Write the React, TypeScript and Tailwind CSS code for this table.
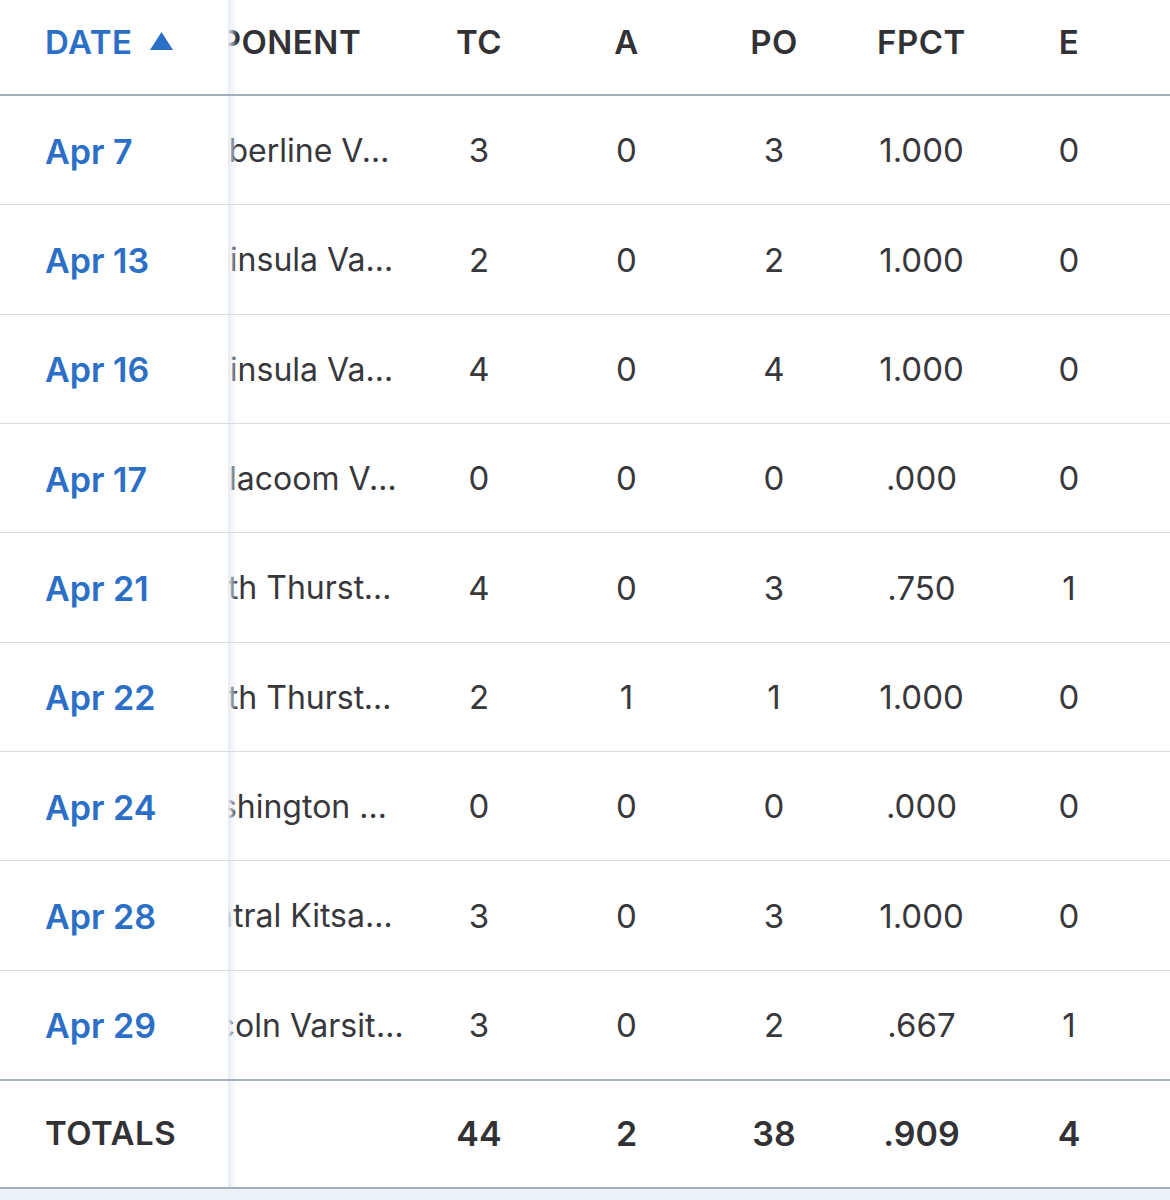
import { useLayoutEffect, useRef } from 'react';

interface GameRow {
  date: string;
  opponent: string;
  tc: number;
  a: number;
  po: number;
  fpct: string;
  e: number;
  dp: number;
}

const rows: GameRow[] = [
  { date: 'Apr 7', opponent: 'Timberline Varsity Baseball', tc: 3, a: 0, po: 3, fpct: '1.000', e: 0, dp: 0 },
  { date: 'Apr 13', opponent: 'Peninsula Varsity Baseball', tc: 2, a: 0, po: 2, fpct: '1.000', e: 0, dp: 0 },
  { date: 'Apr 16', opponent: 'Peninsula Varsity Baseball', tc: 4, a: 0, po: 4, fpct: '1.000', e: 0, dp: 0 },
  { date: 'Apr 17', opponent: 'Steilacoom Varsity Baseball', tc: 0, a: 0, po: 0, fpct: '.000', e: 0, dp: 0 },
  { date: 'Apr 21', opponent: 'North Thurston Varsity Baseball', tc: 4, a: 0, po: 3, fpct: '.750', e: 1, dp: 0 },
  { date: 'Apr 22', opponent: 'North Thurston Varsity Baseball', tc: 2, a: 1, po: 1, fpct: '1.000', e: 0, dp: 0 },
  { date: 'Apr 24', opponent: 'Washington Varsity Baseball', tc: 0, a: 0, po: 0, fpct: '.000', e: 0, dp: 0 },
  { date: 'Apr 28', opponent: 'Central Kitsap Varsity Baseball', tc: 3, a: 0, po: 3, fpct: '1.000', e: 0, dp: 0 },
  { date: 'Apr 29', opponent: 'Lincoln Varsity Baseball', tc: 3, a: 0, po: 2, fpct: '.667', e: 1, dp: 0 },
];

const statHeaders = ['TC', 'A', 'PO', 'FPCT', 'E', 'DP'];

// sticky first column with the soft shadow strip on its right edge
const stickyCell =
  'sticky left-0 z-10 bg-white p-0 relative after:absolute after:top-0 after:bottom-0 after:left-full after:w-[9px] after:bg-linear-to-r after:from-[#e8ecf3] after:to-transparent';

function SortArrow() {
  return (
    <svg width="25" height="20" viewBox="0 0 25 20" className="ml-[17px] mb-[4px]">
      <path d="M12.5 1 L24 19 L1 19 Z" fill="#2c6fc6" />
    </svg>
  );
}

export default function App() {
  const scroller = useRef<HTMLDivElement>(null);

  useLayoutEffect(() => {
    if (scroller.current) scroller.current.scrollLeft = 72;
  }, []);

  return (
    <div className="min-h-[1200px] bg-[#edf2f9] font-['Inter','Liberation_Sans',sans-serif] text-[#323236]">
      <div ref={scroller} className="overflow-x-auto bg-white [scrollbar-width:none]">
        <table className="table-fixed border-separate border-spacing-0 w-[1363px]">
          <colgroup>
            <col className="w-[228px]" />
            <col className="w-[249px]" />
            <col className="w-[148px]" />
            <col className="w-[147px]" />
            <col className="w-[148px]" />
            <col className="w-[147px]" />
            <col className="w-[148px]" />
            <col className="w-[148px]" />
          </colgroup>
          <thead>
            <tr>
              <th className={`${stickyCell} border-b-2 border-[#a4afbc]`}>
                <div className="h-[94px] pb-[8px] flex items-center pl-[45px] text-[33px] font-semibold text-[#2c6fc6] tracking-[0.5px]">
                  DATE
                  <SortArrow />
                </div>
              </th>
              <th className="p-0 border-b-2 border-[#a4afbc]">
                <div className="h-[94px] pb-[8px] flex items-center pl-4 text-[33px] font-semibold tracking-[0.5px] whitespace-nowrap">
                  OPPONENT
                </div>
              </th>
              {statHeaders.map(h => (
                <th key={h} className="p-0 border-b-2 border-[#a4afbc]">
                  <div className="h-[94px] pb-[8px] flex items-center justify-center text-[33px] font-semibold tracking-[0.5px]">
                    {h}
                  </div>
                </th>
              ))}
            </tr>
          </thead>
          <tbody>
            {rows.map((r, i) => {
              const line = i < rows.length - 1 ? 'border-b border-[#d6dce6]' : '';
              const stats = [r.tc, r.a, r.po, r.fpct, r.e, r.dp];
              return (
                <tr key={i}>
                  <td className={`${stickyCell} ${line}`}>
                    <div className="h-[108.33px] pt-[2px] flex items-center pl-[45px] text-[34px] font-semibold text-[#2c6fc6]">
                      {r.date}
                    </div>
                  </td>
                  <td className={`p-0 ${line}`}>
                    <div className="h-[108.33px] pt-[2px] flex items-center pl-4">
                      <div className="w-[235px] truncate text-[32px] text-[#38383c]">{r.opponent}</div>
                    </div>
                  </td>
                  {stats.map((s, j) => (
                    <td key={j} className={`p-0 ${line}`}>
                      <div className="h-[108.33px] pt-[2px] flex items-center justify-center text-[33px] text-[#38383c]">
                        {s}
                      </div>
                    </td>
                  ))}
                </tr>
              );
            })}
          </tbody>
          <tfoot>
            <tr>
              <td className={`${stickyCell} border-y-2 border-[#a4afbc]`}>
                <div className="h-[106px] flex items-center pl-[45px] text-[33px] font-semibold tracking-[0.5px]">
                  TOTALS
                </div>
              </td>
              <td className="p-0 border-y-2 border-[#a4afbc]" />
              {['44', '2', '38', '.909', '4', '0'].map((t, j) => (
                <td key={j} className="p-0 border-y-2 border-[#a4afbc]">
                  <div className="h-[106px] flex items-center justify-center text-[34px] font-semibold">
                    {t}
                  </div>
                </td>
              ))}
            </tr>
          </tfoot>
        </table>
      </div>
    </div>
  );
}
